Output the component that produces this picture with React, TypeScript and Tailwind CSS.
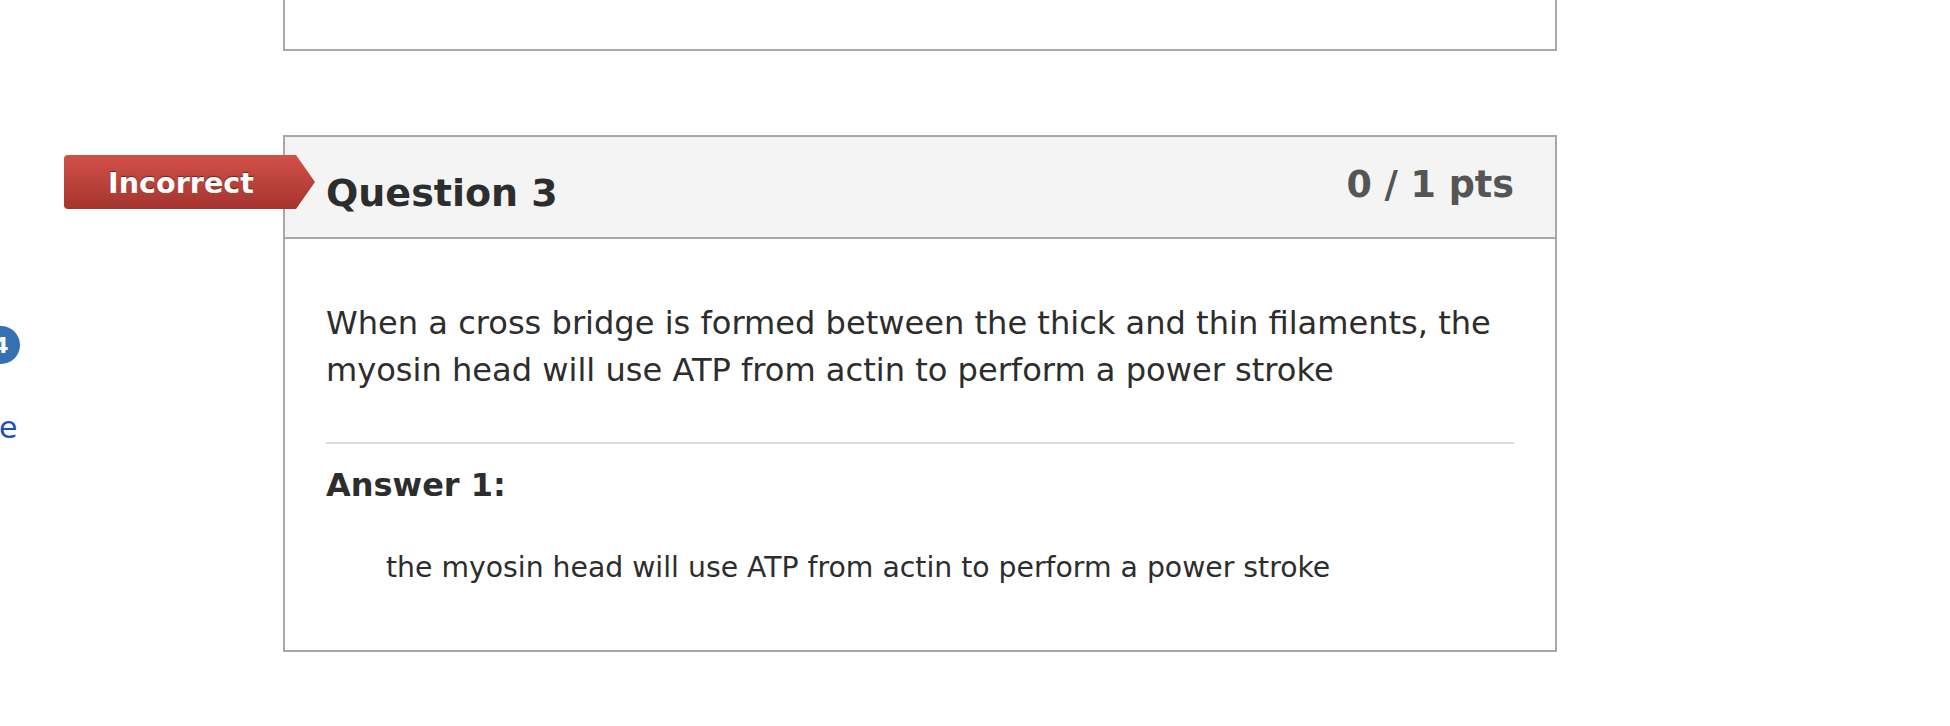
export default function App() {
  return (
    <div className="relative w-[1950px] h-[726px] overflow-hidden bg-white text-[#2d2d2d] [font-family:'DejaVu_Sans',Verdana,sans-serif]">
      <div className="flex">
        {/* sidebar scrolled out of view */}
        <div className="w-[283px] shrink-0 overflow-hidden pt-[326px]">
          <div className="-ml-[18px] flex h-[38px] w-[38px] items-center justify-center rounded-full bg-[#3371b3] text-[22px] font-bold text-white">
            4
          </div>
          <div className="-ml-[20px] mt-[44px] text-[30px] leading-[40px] text-[#1d4fc4]">
            de
          </div>
        </div>

        <div className="w-[1274px] shrink-0">
          {/* end of previous question */}
          <div className="h-[51px] border-x-2 border-b-2 border-[#a8a8a8]" />

          {/* question 3 */}
          <div className="relative mt-[84px] border-2 border-[#a8a8a8]">
            <div className="absolute -left-[221px] top-[18px] flex h-[54px] w-[251px] items-center rounded-l-[4px] bg-gradient-to-b from-[#d2514a] to-[#a5342e] pl-[21px] pt-[3px] [clip-path:polygon(0_0,232px_0,251px_27px,232px_54px,0_54px)]">
              <span className="w-[192px] text-center text-[28.6px] font-bold text-white [text-shadow:0_-1px_1px_rgba(0,0,0,0.45)]">
                Incorrect
              </span>
            </div>

            <div className="flex h-[102px] items-center justify-between border-b-2 border-[#a8a8a8] bg-[#f4f4f4] px-[41px]">
              <h2 className="mt-[12px] text-[38px] font-bold leading-none text-[#2d2d2d]">Question 3</h2>
              <div className="-mt-[4px] text-[36.5px] font-bold leading-none text-[#555555]">0 / 1 pts</div>
            </div>

            <div className="px-[41px] pt-[61px] pb-[61px]">
              <p className="text-[32.1px] leading-[47px]">
                When a cross bridge is formed between the thick and thin filaments, the myosin head will use ATP from actin to perform a power stroke
              </p>
              <div className="mt-[48px] h-[2px] bg-[#dcdcdc]" />
              <div className="mt-[18px] text-[32px] font-bold leading-[47px]">Answer 1:</div>
              <div className="mt-[38px] pl-[60px] text-[28.3px] leading-[42px]">
                the myosin head will use ATP from actin to perform a power stroke
              </div>
            </div>
          </div>
        </div>
      </div>
    </div>
  )
}
